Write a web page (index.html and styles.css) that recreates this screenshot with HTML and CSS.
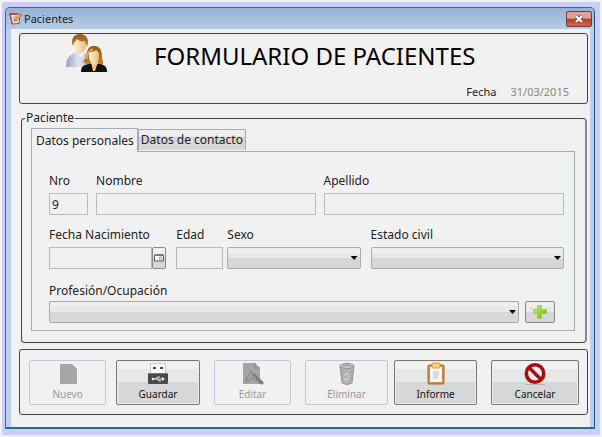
FILE: index.html
```html
<!DOCTYPE html>
<html lang="es">
<head>
<meta charset="utf-8">
<title>Pacientes</title>
<link rel="stylesheet" href="styles.css">
</head>
<body>
<main class="window">
  <header class="titlebar">
    <svg class="title-icon" viewBox="0 0 13 13" aria-hidden="true">
      <path d="M1 1.5l10 .5-1 9.5-7 .5z" fill="#f8eeee" stroke="#b33434"/>
      <path d="M0 1h8l1 2H2l2 9H3z" fill="#c84040"/>
      <path d="M4 5h4M4 7h2M5 9h4" stroke="#889" fill="none"/>
      <path d="M5 9l1-2 5-5 2 1-6 6z" fill="#f1a52b" stroke="#965b22" stroke-width=".5"/>
    </svg>
    <span class="title">Pacientes</span>
    <button class="close" type="button" aria-label="Cerrar">
      <svg viewBox="0 0 10 8" aria-hidden="true"><path d="M2 1l6 6M8 1L2 7" stroke="#6d3c3c" stroke-width="3.6"/><path d="M2 1l6 6M8 1L2 7" stroke="#fff" stroke-width="2.2"/></svg>
    </button>
  </header>

  <form class="content">
    <section class="panel heading">
      <svg class="people" viewBox="0 0 42 40" aria-hidden="true">
        <defs>
          <linearGradient id="shirt" x1="0" x2="1"><stop stop-color="#9a9fbd"/><stop offset=".5" stop-color="#e2e4f0"/><stop offset="1" stop-color="#b0b3ca"/></linearGradient>
          <linearGradient id="hair" x1="0" y1="0" x2="0" y2="1"><stop stop-color="#8f5c10"/><stop offset="1" stop-color="#c4852e"/></linearGradient>
          <linearGradient id="skin" x1="0" x2="1"><stop stop-color="#fff0d5"/><stop offset="1" stop-color="#e9bd85"/></linearGradient>
        </defs>
        <path d="M0 33c0-9 3-12 9-14h9c5 1 7 5 7 14z" fill="url(#shirt)"/>
        <path d="M10 17h9l-3 7z" fill="#f7f7fc"/>
        <path d="M8 8c0-4 12-4 12 0 1 7-2 12-6 12s-7-5-6-12z" fill="url(#skin)"/>
        <path d="M7 12C4 5 8 0 14 0s10 5 7 13l-2-6c-3 1-6 0-8-2l-3 4z" fill="url(#hair)"/>
        <path d="M19 29c-3 0-1-3 1-5 1-8 2-12 8-12 7 0 8 6 8 11 0 3 2 4 1 7-1 2-14 3-18-1z" fill="url(#hair)"/>
        <path d="M15 38c0-5 2-7 8-8h11c5 1 7 3 7 8z" fill="#111"/>
        <path d="M25 28h7l-3 9h-2z" fill="#f0c692"/>
        <path d="M23 19c1-2 6-1 7-3 2 1 3 3 3 5 0 6-2 9-5 9s-6-5-5-11z" fill="url(#skin)"/>
        <path d="M21 25c0-6 3-9 6-10" fill="none" stroke="#e8b459" stroke-width="1.5"/>
      </svg>
      <h1>FORMULARIO DE PACIENTES</h1>
      <p class="date"><span>Fecha</span><time datetime="2015-03-31">31/03/2015</time></p>
    </section>

    <fieldset class="patient">
      <legend>Paciente</legend>
      <div class="tabs" role="tablist">
        <button class="tab active" type="button" role="tab" aria-selected="true">Datos personales</button>
        <button class="tab" type="button" role="tab" aria-selected="false">Datos de contacto</button>
      </div>
      <div class="pane" role="tabpanel">
        <div class="row">
          <div class="field nro"><label for="nro">Nro</label><input id="nro" type="text" value="9"></div>
          <div class="field nombre"><label for="nombre">Nombre</label><input id="nombre" type="text"></div>
          <div class="field apellido"><label for="apellido">Apellido</label><input id="apellido" type="text"></div>
        </div>
        <div class="row details">
          <div class="field nacimiento">
            <label for="nacimiento">Fecha Nacimiento</label>
            <div class="picker">
              <input id="nacimiento" type="text">
              <button class="calendar" type="button" aria-label="Elegir fecha">
                <svg viewBox="0 0 10 8" aria-hidden="true"><path d="M.5 1h9v6h-9z" fill="#fff" stroke="#555"/><path d="M1 1h8" stroke="#777" stroke-width="2"/><path d="M1 1h2" stroke="#f08c3c"/><circle cx="6.5" cy="4.5" r="1.4" fill="none" stroke="#e76b5c"/></svg>
              </button>
            </div>
          </div>
          <div class="pair">
            <div class="field edad"><label for="edad">Edad</label><input id="edad" type="text"></div>
            <div class="field sexo"><label for="sexo">Sexo</label><div class="select"><select id="sexo"><option></option></select></div></div>
          </div>
          <div class="field civil"><label for="civil">Estado civil</label><div class="select"><select id="civil"><option></option></select></div></div>
        </div>
        <div class="field">
          <label class="tight" for="profesion">Profesión/Ocupación</label>
          <div class="occupation">
            <div class="select"><select id="profesion"><option></option></select></div>
            <button class="add" type="button" aria-label="Agregar">
              <svg viewBox="0 0 16 16" aria-hidden="true"><defs><linearGradient id="plus" x1="0" y1="0" x2="1" y2="1"><stop stop-color="#d4f26c"/><stop offset="1" stop-color="#5fb800"/></linearGradient></defs><path d="M5.5 1.5h4v4h5v4h-5v5h-4v-5h-4v-4h4z" fill="url(#plus)" stroke="#9bd63a"/></svg>
            </button>
          </div>
        </div>
      </div>
    </fieldset>

    <section class="panel actions">
      <div class="group first">
        <button class="action nuevo" type="button" disabled>
          <svg viewBox="0 0 24 24" aria-hidden="true"><path d="M4 2h12l5 5v15H4z" fill="#a5a5a5"/></svg>
          Nuevo
        </button>
        <button class="action guardar" type="button">
          <svg viewBox="0 0 24 24" aria-hidden="true"><path d="M4.500 1.500h15v11h-15z" fill="#fafafa" stroke="#c8c8c8"/><path d="M7 5h3v2H7zM14 5h3v2h-3z" fill="#444"/><path d="M2 11h20v10q0 1-1 1H3q-1 0-1-1z" fill="#4b4b4b"/><path d="M2 11.500h20" stroke="#777"/><path d="M7 17h10M9 17l3-2h2M11 17l2 2h2" fill="none" stroke="#eee"/><circle cx="7" cy="17" r="1.3" fill="#eee"/><path d="M16 15l3 2-3 2z" fill="#eee"/></svg>
          Guardar
        </button>
      </div>
      <button class="action editar" type="button" disabled>
        <svg viewBox="0 0 24 24" aria-hidden="true"><path d="M2 1h12l5 5v16H2z" fill="#a5a5a5"/><path d="M14 1v5h5" fill="none" stroke="#858585"/><path d="M4 19l6-10 12 11v2h-2l-8-6-4 3z" fill="#a0a0a0" stroke="#858585"/><path d="M12 12l9 9" stroke="#808080" stroke-width="3"/><path d="M5 4l7 7" stroke="#919191"/></svg>
        Editar
      </button>
      <div class="group second">
        <button class="action eliminar" type="button" disabled>
          <svg viewBox="0 0 24 24" aria-hidden="true"><path d="M5 4l2 17q5 3 10 0l2-17z" fill="#b3b3b3" stroke="#999"/><ellipse cx="12" cy="4" rx="7" ry="2.5" fill="#ccc" stroke="#8c8c8c"/><path d="M8 4q4-2 8 0" fill="none" stroke="#888"/><path d="M9 14l3-3 2 2M14 15l-2 3-3-1" fill="none" stroke="#ddd"/><path d="M7 8v10M17 8v10" stroke="#999"/></svg>
          Eliminar
        </button>
        <button class="action informe" type="button">
          <svg viewBox="0 0 24 24" aria-hidden="true"><rect x="4" y="3" width="16" height="19" rx="1" fill="#c78e4d" stroke="#a76c31"/><path d="M6 5h12v15H6z" fill="#f6f6f6"/><path d="M9 9h6v5l-3 3H9z" fill="#d6d8dc"/><rect x="8" y="1" width="8" height="5" rx="1" fill="#ffd46a" stroke="#d49b35"/></svg>
          Informe
        </button>
      </div>
      <button class="action cancelar" type="button">
        <svg viewBox="0 0 24 24" aria-hidden="true"><path d="M2 22.500h20" stroke="#b5b5b5"/><circle cx="12" cy="11.500" r="8.700" fill="#eee" stroke="#a80d12" stroke-width="3.600"/><path d="M6 5.500l12 12" stroke="#a80d12" stroke-width="3.600"/></svg>
        Cancelar
      </button>
    </section>
  </form>
</main>
</body>
</html>
```
FILE: styles.css
```css
* { box-sizing: border-box; }

html { background: #f1f1f1; }

body {
  min-height: 100vh;
  margin: 0;
  padding: 5px 5px 6px 3px;
  border: 2px solid #f1f1f1;
  background: #ccccff;
  color: #222;
  font: 12px/16px "Noto Sans", "Open Sans", sans-serif;
}

button, input, select { font: inherit; color: inherit; margin: 0; }

svg { display: block; }

.window {
  border: 1px solid #55606c;
  border-right-color: #1d5570;
  border-bottom: 2px solid #22708a;
  border-radius: 5px 5px 0 0;
  padding: 0 4px 0 5px;
  background: #b9d1ea;
}

.titlebar {
  display: flex;
  align-items: center;
  height: 21px;
  margin: 0 -4px 0 -5px;
  padding: 0 2px 0 3px;
  border-radius: 4px 4px 0 0;
  background: linear-gradient(#96b2d1, #b5cee8);
}

.title-icon { width: 13px; height: 13px; }

.title { flex: 1; margin-left: 2px; font-size: 11px; }

.close {
  display: grid;
  place-items: center;
  width: 26px;
  height: 16px;
  padding: 0;
  border: 1px solid #733b38;
  border-radius: 2px;
  background: linear-gradient(#dda295 0 45%, #b93c25 50%, #cf6b4b);
}

.close svg { width: 10px; height: 8px; }

.content {
  padding: 4px 2px 12px 8px;
  background: #f1f1f1;
}

.panel { border: 1px solid #444; border-radius: 3px; }

.heading {
  display: grid;
  grid-template-columns: 44px 1fr;
  column-gap: 44px;
  height: 71px;
  padding: 0 18px 0 46px;
}

.people { width: 42px; height: 40px; }

h1 {
  margin: 0;
  color: #000;
  font-size: 24px;
  font-weight: 400;
  line-height: 44px;
  white-space: nowrap;
}

.date {
  grid-column: 1 / -1;
  display: flex;
  justify-content: flex-end;
  gap: 14px;
  margin: 2px 0 0;
  font-size: 11px;
}

.date time { color: #888; }

.patient {
  min-width: 0;
  margin: 6px 1px 6px 2px;
  padding: 2px 10px 11px 9px;
  border: 1px solid #444;
  border-right: 2px solid #888;
  border-radius: 4px;
}

.patient legend { margin-left: -6px; padding: 0 1px; }

.tabs { display: flex; align-items: flex-end; }

.tab {
  height: 21px;
  margin-bottom: 1px;
  padding: 0 2px;
  border: 1px solid #a5abb2;
  border-bottom: 0;
  background: linear-gradient(#eee 0 30%, #d6d8d8 35%);
  line-height: 20px;
  white-space: nowrap;
}

.tab.active {
  z-index: 1;
  height: 24px;
  margin-bottom: -1px;
  padding: 0 3px 0 4px;
  background: #f1f1f1;
}

.pane {
  padding: 21px 10px 7px 17px;
  border: 1px solid #a5abb2;
}

.row { display: flex; gap: 8px; margin-bottom: 12px; }

.details { gap: 10px; margin-bottom: 14px; }

.field { display: flex; flex-direction: column; min-width: 0; }

label { margin-bottom: 4px; white-space: nowrap; }

.tight { margin-bottom: 2px; }

input {
  width: 100%;
  min-width: 0;
  height: 22px;
  padding: 0 2px;
  border: 1px solid #bbb;
  border-radius: 0;
  background: #f1f1f1;
}

.nro { flex: 39 0 0; }
.nombre { flex: 219 0 0; }
.apellido { flex: 240 0 0; }
.nacimiento { flex: 117 0 0; }
.pair { display: flex; flex: 184 0 0; gap: 4px; }
.edad { flex: 47 0 0; }
.sexo { flex: 133 0 0; }
.civil { flex: 193 0 0; }

.picker, .occupation { display: flex; }

.occupation { gap: 6px; padding-right: 9px; }

.occupation .select { flex: 1; }

.calendar {
  display: grid;
  place-items: center;
  flex: 0 0 14px;
  height: 22px;
  padding: 0;
  border: 1px solid #888;
  border-radius: 2px;
  background: linear-gradient(#f1f1f1 50%, #d6d8d8 50%);
}

.calendar svg { width: 10px; height: 8px; }

.select { position: relative; }

.select::after {
  content: "";
  position: absolute;
  top: 9px;
  right: 3px;
  width: 7px;
  height: 4px;
  background: #000;
  clip-path: polygon(0 0, 100% 0, 50% 100%);
  pointer-events: none;
}

select {
  display: block;
  width: 100%;
  height: 22px;
  appearance: none;
  border: 1px solid #aaa;
  border-radius: 2px;
  background: linear-gradient(#efefef 0 25%, #e6e7e7 25% 50%, #d6d8d8 50%);
}

.add {
  display: grid;
  place-items: center;
  width: 30px;
  height: 22px;
  padding: 0;
  border: 1px solid #888;
  border-radius: 2px;
  background: linear-gradient(#efefef 0 25%, #e6e7e7 25% 50%, #d6d8d8 50%);
}

.add svg { width: 16px; height: 16px; }

.actions {
  display: flex;
  gap: 14px;
  padding: 10px 8px 9px 9px;
}

.group { display: flex; min-width: 0; }

.first { flex: 173 0 0; gap: 10px; }
.second { flex: 174 0 0; gap: 6px; }

.action {
  display: flex;
  flex-direction: column;
  align-items: center;
  min-width: 0;
  height: 45px;
  padding: 1px 0 0;
  border: 1px solid #777;
  border-radius: 2px;
  background: linear-gradient(#f1f1f1 0 18%, #e6e7e7 18% 48%, #d6d8d8 48%);
  box-shadow: inset 0 0 0 1px #eee;
  color: #111;
  font-size: 10px;
  line-height: 16px;
}

.action svg { width: 24px; height: 24px; }

.action:disabled {
  border-color: #c3c9d0;
  background: #f1f1f1;
  box-shadow: none;
  color: #999;
}

.nuevo { flex: 78 0 0; }
.guardar { flex: 85 0 0; }
.editar { flex: 76 0 0; }
.eliminar { flex: 84 0 0; }
.informe { flex: 84 0 0; }
.cancelar { flex: 87 0 0; }
```
